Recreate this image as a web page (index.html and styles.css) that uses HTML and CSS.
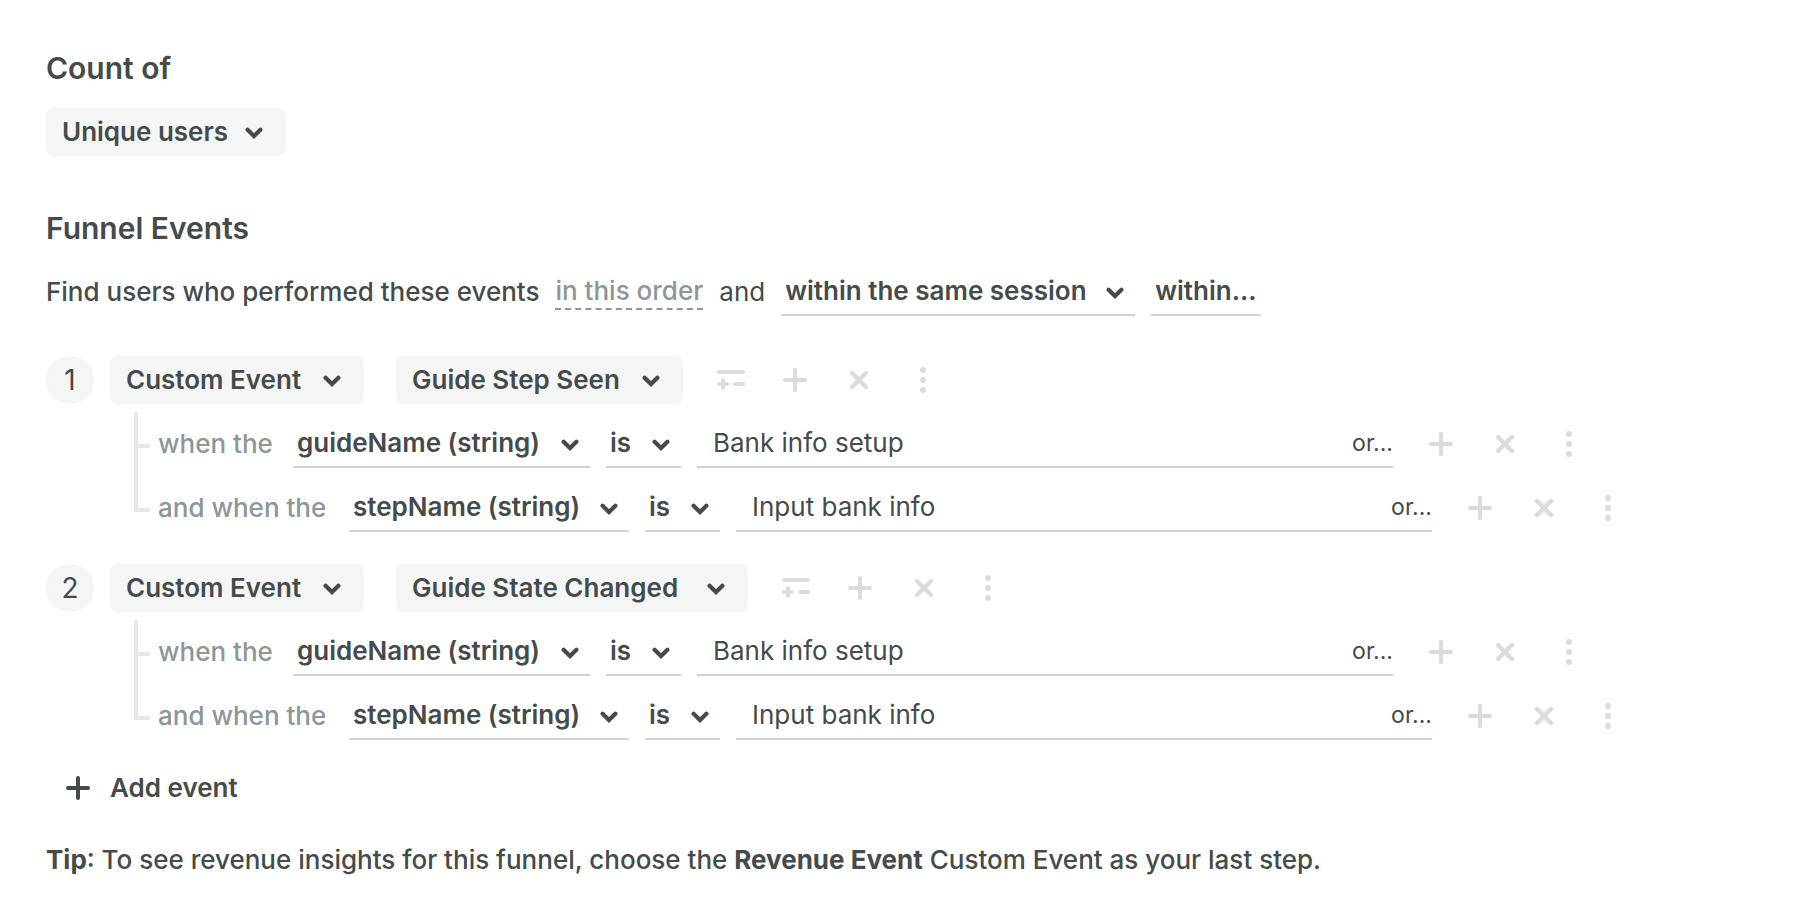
FILE: index.html
```html
<!DOCTYPE html>
<html lang="en">
  <head>
    <meta charset="utf-8">
    <title>Funnel Events</title>
    <link rel="stylesheet" href="styles.css">
  </head>
  <body>
    <!-- Icons shared by all the rows -->
    <svg class="sprite" aria-hidden="true">
      <symbol id="chevron" viewBox="0 0 18 12"><path d="M2.6 2.8 9 9 15.4 2.8" fill="none" stroke="currentColor" stroke-width="4.2" stroke-linecap="round"/></symbol>
      <symbol id="plus" viewBox="0 0 32 32"><path d="M16 6v20M6 16h20" fill="none" stroke="currentColor" stroke-width="4" stroke-linecap="round"/></symbol>
      <symbol id="cross" viewBox="0 0 32 32"><path d="M9 9l14 14M23 9L9 23" fill="none" stroke="currentColor" stroke-width="4.4" stroke-linecap="round"/></symbol>
      <symbol id="dots" viewBox="0 0 32 32"><g fill="currentColor"><circle cx="16" cy="6" r="3"/><circle cx="16" cy="16" r="3"/><circle cx="16" cy="26" r="3"/></g></symbol>
      <symbol id="inline" viewBox="0 0 32 32"><path d="M4 8h24M4 20h8M8 16v8M20 20h8" fill="none" stroke="currentColor" stroke-width="4" stroke-linecap="round"/></symbol>
    </svg>

    <main>
      <section class="count">
        <h2><label for="countOf">Count of</label></h2>
        <span class="dropdown pill">
          <select id="countOf" class="users"><option>Unique users</option></select>
          <svg class="chevron"><use href="#chevron"/></svg>
        </span>
      </section>

      <section class="funnel">
        <h2>Funnel Events</h2>
        <div class="sentence">
          <span class="medium">Find users who performed these events</span>
          <button type="button" class="order">in this order</button>
          <span class="light">and</span>
          <span class="dropdown line">
            <select class="session" aria-label="Session"><option>within the same session</option></select>
            <svg class="chevron"><use href="#chevron"/></svg>
          </span>
          <button type="button" class="within">within...</button>
        </div>

        <ol class="events">
          <li>
            <div class="event">
              <span class="number">1</span>
              <span class="dropdown pill">
                <select class="kind" aria-label="Event type"><option>Custom Event</option></select>
                <svg class="chevron"><use href="#chevron"/></svg>
              </span>
              <div class="event-main">
                <span class="dropdown pill">
                  <select class="seen" aria-label="Event"><option>Guide Step Seen</option></select>
                  <svg class="chevron"><use href="#chevron"/></svg>
                </span>
                <button type="button" class="icon" aria-label="Inline event"><svg><use href="#inline"/></svg></button>
                <button type="button" class="icon" aria-label="Add filter"><svg><use href="#plus"/></svg></button>
                <button type="button" class="icon" aria-label="Remove event"><svg><use href="#cross"/></svg></button>
                <button type="button" class="icon" aria-label="More"><svg><use href="#dots"/></svg></button>
              </div>
            </div>
            <ul class="filters">
              <li class="filter">
                <label for="guide1" class="when">when the</label>
                <span class="dropdown line">
                  <select id="guide1" class="guide-name"><option>guideName (string)</option></select>
                  <svg class="chevron"><use href="#chevron"/></svg>
                </span>
                <span class="dropdown line">
                  <select class="operator" aria-label="Operator"><option>is</option></select>
                  <svg class="chevron"><use href="#chevron"/></svg>
                </span>
                <div class="value">
                  <input type="text" value="Bank info setup" aria-label="Value">
                  <button type="button" class="or">or...</button>
                </div>
                <div class="actions">
                  <button type="button" class="icon" aria-label="Add filter"><svg><use href="#plus"/></svg></button>
                  <button type="button" class="icon" aria-label="Remove filter"><svg><use href="#cross"/></svg></button>
                  <button type="button" class="icon" aria-label="More"><svg><use href="#dots"/></svg></button>
                </div>
              </li>
              <li class="filter">
                <label for="step1" class="when and-when">and when the</label>
                <span class="dropdown line">
                  <select id="step1" class="step-name"><option>stepName (string)</option></select>
                  <svg class="chevron"><use href="#chevron"/></svg>
                </span>
                <span class="dropdown line">
                  <select class="operator" aria-label="Operator"><option>is</option></select>
                  <svg class="chevron"><use href="#chevron"/></svg>
                </span>
                <div class="value">
                  <input type="text" value="Input bank info" aria-label="Value">
                  <button type="button" class="or">or...</button>
                </div>
                <div class="actions">
                  <button type="button" class="icon" aria-label="Add filter"><svg><use href="#plus"/></svg></button>
                  <button type="button" class="icon" aria-label="Remove filter"><svg><use href="#cross"/></svg></button>
                  <button type="button" class="icon" aria-label="More"><svg><use href="#dots"/></svg></button>
                </div>
              </li>
            </ul>
          </li>
          <li>
            <div class="event">
              <span class="number">2</span>
              <span class="dropdown pill">
                <select class="kind" aria-label="Event type"><option>Custom Event</option></select>
                <svg class="chevron"><use href="#chevron"/></svg>
              </span>
              <div class="event-main">
                <span class="dropdown pill">
                  <select class="changed" aria-label="Event"><option>Guide State Changed</option></select>
                  <svg class="chevron"><use href="#chevron"/></svg>
                </span>
                <button type="button" class="icon" aria-label="Inline event"><svg><use href="#inline"/></svg></button>
                <button type="button" class="icon" aria-label="Add filter"><svg><use href="#plus"/></svg></button>
                <button type="button" class="icon" aria-label="Remove event"><svg><use href="#cross"/></svg></button>
                <button type="button" class="icon" aria-label="More"><svg><use href="#dots"/></svg></button>
              </div>
            </div>
            <ul class="filters">
              <li class="filter">
                <label for="guide2" class="when">when the</label>
                <span class="dropdown line">
                  <select id="guide2" class="guide-name"><option>guideName (string)</option></select>
                  <svg class="chevron"><use href="#chevron"/></svg>
                </span>
                <span class="dropdown line">
                  <select class="operator" aria-label="Operator"><option>is</option></select>
                  <svg class="chevron"><use href="#chevron"/></svg>
                </span>
                <div class="value">
                  <input type="text" value="Bank info setup" aria-label="Value">
                  <button type="button" class="or">or...</button>
                </div>
                <div class="actions">
                  <button type="button" class="icon" aria-label="Add filter"><svg><use href="#plus"/></svg></button>
                  <button type="button" class="icon" aria-label="Remove filter"><svg><use href="#cross"/></svg></button>
                  <button type="button" class="icon" aria-label="More"><svg><use href="#dots"/></svg></button>
                </div>
              </li>
              <li class="filter">
                <label for="step2" class="when and-when">and when the</label>
                <span class="dropdown line">
                  <select id="step2" class="step-name"><option>stepName (string)</option></select>
                  <svg class="chevron"><use href="#chevron"/></svg>
                </span>
                <span class="dropdown line">
                  <select class="operator" aria-label="Operator"><option>is</option></select>
                  <svg class="chevron"><use href="#chevron"/></svg>
                </span>
                <div class="value">
                  <input type="text" value="Input bank info" aria-label="Value">
                  <button type="button" class="or">or...</button>
                </div>
                <div class="actions">
                  <button type="button" class="icon" aria-label="Add filter"><svg><use href="#plus"/></svg></button>
                  <button type="button" class="icon" aria-label="Remove filter"><svg><use href="#cross"/></svg></button>
                  <button type="button" class="icon" aria-label="More"><svg><use href="#dots"/></svg></button>
                </div>
              </li>
            </ul>
          </li>
        </ol>

        <button type="button" class="add-event"><svg><use href="#plus"/></svg>Add event</button>
        <p class="tip"><strong>Tip</strong>: To see revenue insights for this funnel, choose the <strong>Revenue Event</strong> Custom Event as your last step.</p>
      </section>
    </main>
  </body>
</html>
```
FILE: styles.css
```css
*,
*::before {
  box-sizing: border-box;
}

body {
  margin: 0;
  background-color: #fff;
  color: #444b4a; /* Dark grey */
  font-family: Inter, "Liberation Sans", sans-serif;
  font-size: 26px;
  line-height: 32px;
}

main {
  padding: 50px 46px 16px;
}

.sprite {
  display: none;
}

h2 {
  margin: 0 0 22px;
  font-size: 30px;
  font-weight: 600;
  line-height: 36px;
}

ol,
ul {
  list-style: none;
  margin: 0;
  padding: 0;
}

button,
input,
select {
  margin: 0;
  padding: 0;
  border: none;
  border-radius: 0;
  background: none;
  color: inherit;
  font: inherit;
}

.count {
  display: flex;
  flex-direction: column;
  align-items: flex-start;
  margin-bottom: 54px;
}

.medium {
  font-weight: 500;
}

/* Dropdowns: grey pills, or underlined inside a sentence */
.dropdown {
  position: relative;
  display: inline-flex;
}

.dropdown select {
  -webkit-appearance: none;
  appearance: none;
  height: 48px;
  font-weight: 600;
}

.pill select {
  padding: 0 48px 0 16px;
  border-radius: 8px;
  background-color: #f4f6f6; /* Off-white */
}

.line select {
  padding: 0 32px 0 4px;
  border-bottom: 2px solid #cdd3d2; /* Light grey */
}

.users {
  width: 240px;
}

.kind {
  width: 254px;
}

.seen {
  width: 287px;
}

.changed {
  width: 352px;
}

.session {
  width: 354px;
}

.guide-name {
  width: 297px;
}

.step-name {
  width: 280px;
}

.operator {
  width: 75px;
}

.chevron {
  position: absolute;
  top: 19px;
  right: 23px;
  width: 18px;
  height: 12px;
  pointer-events: none;
}

.line .chevron {
  right: 11px;
}

.sentence {
  display: flex;
  align-items: center;
  gap: 16px;
  margin-bottom: 40px;
}

.order {
  height: 36px;
  border-bottom: 2px dashed #8c9796;
  color: #8c9796;
  font-weight: 500;
}

.within {
  height: 48px;
  padding: 0 4px;
  border-bottom: 2px solid #cdd3d2;
  font-weight: 600;
}

/* Events */
.events {
  display: flex;
  flex-direction: column;
  gap: 32px;
}

.event {
  display: flex;
  gap: 16px;
}

.event-main {
  display: flex;
  align-items: center;
  gap: 32px;
  margin-left: 16px;
}

.number {
  width: 48px;
  border-radius: 50%;
  background-color: #f4f6f6;
  font-size: 28px;
  line-height: 48px;
  text-align: center;
}

.icon {
  width: 32px;
  height: 32px;
  color: #dadcdb;
  cursor: pointer;
}

.icon svg,
.add-event svg {
  display: block;
  width: 32px;
  height: 32px;
}

/* Filters under an event */
.filters {
  display: flex;
  flex-direction: column;
  gap: 16px;
  margin-top: 16px;
  padding-left: 88px;
}

.filter {
  display: flex;
  align-items: center;
  gap: 16px;
}

.filter::before { /* Branch of the tree line */
  content: "";
  align-self: flex-start;
  width: 16px;
  height: 64px;
  margin: -36px -8px 0 0;
  border-left: 4px solid #e3e7e9;
  border-bottom: 4px solid #e3e7e9;
}

.filter:first-child::before {
  height: 36px;
  margin-top: -8px;
}

.when {
  min-width: 119px;
  color: #8c9796;
  font-weight: 500;
}

.and-when {
  min-width: 175px;
}

.value {
  display: flex;
  flex: 0 1 696px;
  height: 48px;
  border-bottom: 2px solid #cdd3d2;
}

.value input {
  flex: 1;
  min-width: 0;
  padding: 0 16px;
}

.or {
  font-size: 23px;
}

.actions {
  display: flex;
  gap: 32px;
  margin-left: 16px;
}

.add-event {
  display: flex;
  align-items: center;
  gap: 16px;
  height: 48px;
  margin-top: 24px;
  padding-left: 16px;
  font-weight: 600;
}

.tip {
  margin: 32px 0 0;
  font-weight: 500;
}

.tip strong {
  font-weight: 700;
}
```
